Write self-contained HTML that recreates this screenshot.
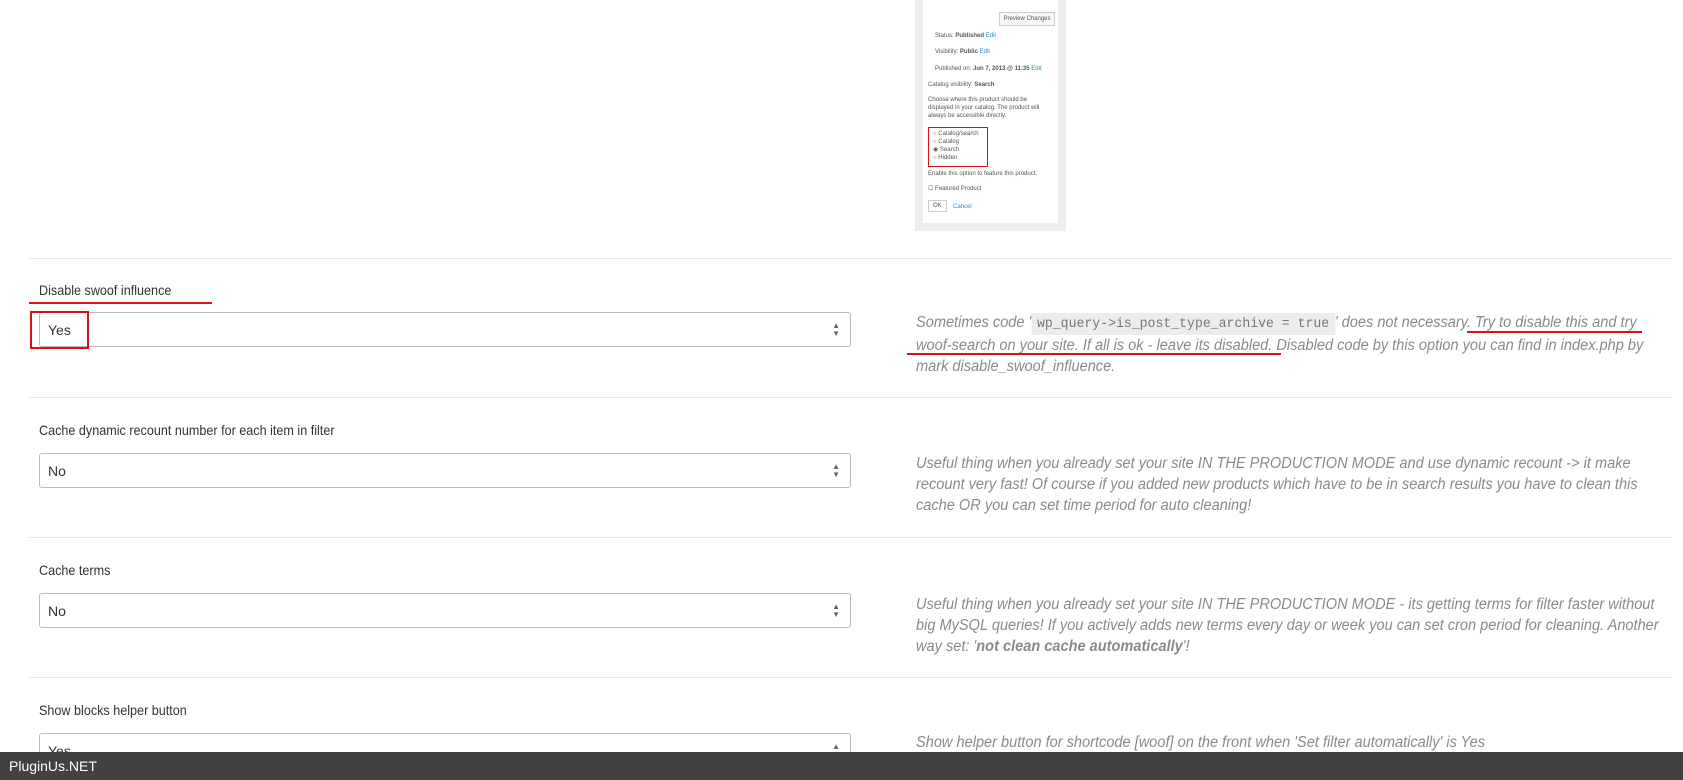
<!DOCTYPE html>
<html><head><meta charset="utf-8"><style>
*{margin:0;padding:0;box-sizing:border-box}
body{width:1683px;height:780px;overflow:hidden;background:#fff;font-family:"Liberation Sans",sans-serif;position:relative}
.abs{position:absolute}
.sep{position:absolute;left:29px;width:1643px;height:1px;background:#e5e5e5}
.lbl{position:absolute;left:39px;font-size:14px;color:#333;transform:scaleX(.9);transform-origin:left;white-space:nowrap}
.sel{position:absolute;left:39px;width:812px;height:35px;border:1px solid #bbb;border-radius:3px;background:#fff;font-size:14px;color:#333;padding:9px 8px}
.sel .ar{position:absolute;right:10px;top:9px;font-size:8px;line-height:8px;color:#666}
.desc{position:absolute;left:916px;font-size:15.5px;line-height:21px;color:#8a8a8a;font-style:italic;white-space:nowrap;transform:scaleX(.94);transform-origin:left top}
.desc code{font-family:"Liberation Mono",monospace;font-style:normal;background:#ececec;padding:3px 6px;font-size:14px;color:#777}
.red{position:absolute;background:#d9121a;height:2px}
.shot{position:absolute;left:915px;top:0;width:151px;height:231px;background:#eee}
.shot .p{position:absolute;left:8px;top:0;width:135px;height:223px;background:#fff;font-size:6px;color:#555;line-height:8px}
.foot{position:absolute;left:0;top:752px;width:1683px;height:28px;background:#424242;color:#fff;font-size:14px;padding:6px 9px}
</style></head><body>
<div class="shot"><div class="p">
<div class="abs" style="left:76px;top:12px;width:56px;height:14px;border:1px solid #ccc;background:#f7f7f7;font-size:6px;text-align:center;line-height:12px">Preview Changes</div>
<div class="abs" style="left:12px;top:32px">Status: <b>Published</b> <span style="color:#2a8ac9">Edit</span></div>
<div class="abs" style="left:12px;top:48px">Visibility: <b>Public</b> <span style="color:#2a8ac9">Edit</span></div>
<div class="abs" style="left:12px;top:65px">Published on: <b>Jun 7, 2013 @ 11:35</b> <span style="color:#2a8ac9">Edit</span></div>
<div class="abs" style="left:5px;top:81px">Catalog visibility: <b>Search</b></div>
<div class="abs" style="left:5px;top:96px">Choose where this product should be<br>displayed in your catalog. The product will<br>always be accessible directly.</div>
<div class="abs" style="left:5px;top:127px;width:60px;height:40px;border:1px solid #d9121a;padding:2px 4px">○ Catalog/search<br>○ Catalog<br>◉ Search<br>○ Hidden</div>
<div class="abs" style="left:5px;top:170px">Enable this option to feature this product.</div>
<div class="abs" style="left:5px;top:185px">☐ Featured Product</div>
<div class="abs" style="left:5px;top:200px;border:1px solid #ccc;padding:1px 4px">OK</div>
<div class="abs" style="left:30px;top:203px;color:#2a8ac9">Cancel</div>
</div></div>

<div class="sep" style="top:258px"></div>
<div class="lbl" style="top:282px">Disable swoof influence</div>
<div class="red" style="left:29px;top:302px;width:183px"></div>
<div class="sel" style="top:312px">Yes<div class="ar">▲<br>▼</div></div>
<div class="abs" style="left:30px;top:311px;width:59px;height:38px;border:2px solid #d9121a"></div>
<div class="desc" style="top:312px">Sometimes code '<code>wp_query-&gt;is_post_type_archive = true</code>' does not necessary. Try to disable this and try<br>woof-search on your site. If all is ok - leave its disabled. Disabled code by this option you can find in index.php by<br>mark disable_swoof_influence.</div>
<div class="red" style="left:1467px;top:331px;width:175px"></div>
<div class="red" style="left:907px;top:353px;width:374px"></div>

<div class="sep" style="top:397px"></div>
<div class="lbl" style="top:422px">Cache dynamic recount number for each item in filter</div>
<div class="sel" style="top:453px">No<div class="ar">▲<br>▼</div></div>
<div class="desc" style="top:453px">Useful thing when you already set your site IN THE PRODUCTION MODE and use dynamic recount -&gt; it make<br>recount very fast! Of course if you added new products which have to be in search results you have to clean this<br>cache OR you can set time period for auto cleaning!</div>

<div class="sep" style="top:537px"></div>
<div class="lbl" style="top:562px">Cache terms</div>
<div class="sel" style="top:593px">No<div class="ar">▲<br>▼</div></div>
<div class="desc" style="top:594px">Useful thing when you already set your site IN THE PRODUCTION MODE - its getting terms for filter faster without<br>big MySQL queries! If you actively adds new terms every day or week you can set cron period for cleaning. Another<br>way set: '<b>not clean cache automatically</b>'!</div>

<div class="sep" style="top:677px"></div>
<div class="lbl" style="top:702px">Show blocks helper button</div>
<div class="sel" style="top:733px">Yes<div class="ar">▲<br>▼</div></div>
<div class="desc" style="top:732px">Show helper button for shortcode [woof] on the front when 'Set filter automatically' is Yes</div>

<div class="foot">PluginUs.NET</div>
</body></html>
